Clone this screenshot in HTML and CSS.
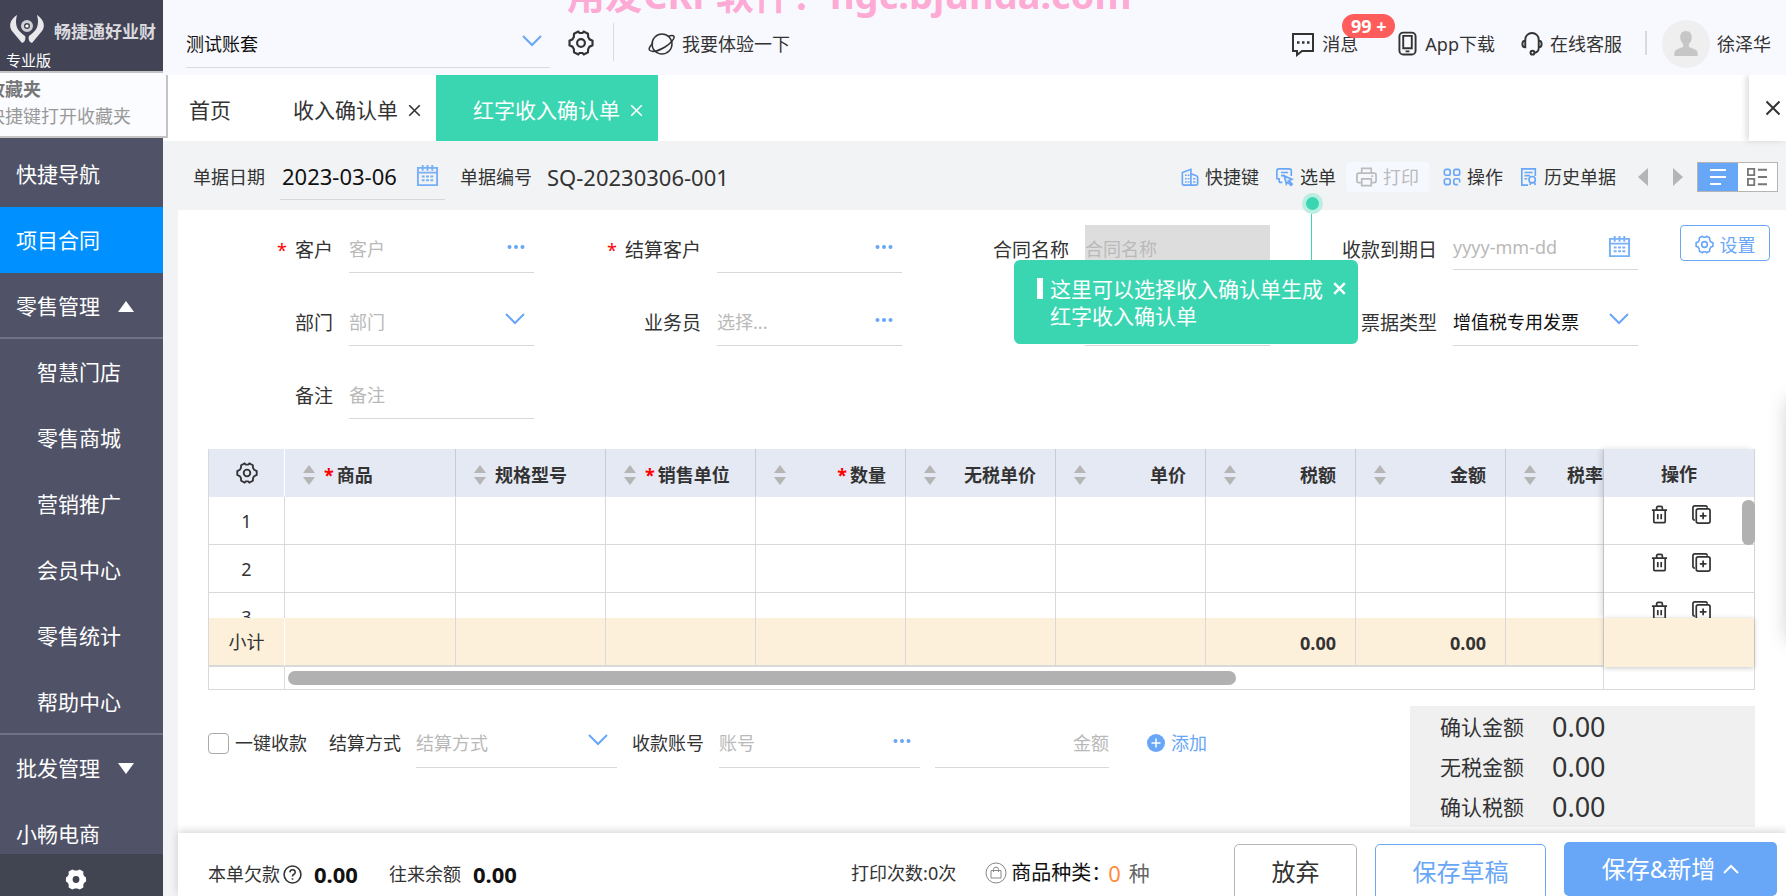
FILE: index.html
```html
<!DOCTYPE html>
<html lang="zh-CN">
<head>
<meta charset="utf-8">
<title>红字收入确认单</title>
<link rel="stylesheet" href="styles.css">
</head>
<body>
<svg class="sprite" aria-hidden="true">
  <symbol id="gear" viewBox="0 0 24 24"><path d="M9.4 1.5l1.3 1.3h2.6l1.3-1.3 3.8 2 .2 2.9 1.3 2.2 2.7 1.3v4.2l-2.7 1.3-1.3 2.2-.2 2.9-3.8 2-1.3-1.3h-2.6l-1.3 1.3-3.8-2-.2-2.9-1.3-2.2-2.7-1.3V9.9l2.7-1.3 1.3-2.2.2-2.9z"/><circle cx="12" cy="12" r="3.6"/></symbol>
  <symbol id="down" viewBox="0 0 20 12"><path d="M1 1l9 9 9-9"/></symbol>
  <symbol id="cross" viewBox="0 0 16 16"><path d="M1.500 1.500l13 13M14.500 1.500l-13 13"/></symbol>
  <symbol id="calendar" viewBox="0 0 24 24"><path d="M2 4h20v18H2zM2 9h20M7 1v6M12 1v6M17 1v6M6 13h3M10.500 13h3M15 13h3M6 17h3M10.500 17h3M15 17h3"/></symbol>
  <symbol id="dots" viewBox="0 0 18 6"><circle cx="2.500" cy="3" r="2"/><circle cx="9" cy="3" r="2"/><circle cx="15.500" cy="3" r="2"/></symbol>
  <symbol id="sort" viewBox="0 0 12 20"><path d="M6 0l6 8H0zM6 20l6-8H0z"/></symbol>
  <symbol id="trash" viewBox="0 0 18 20"><path d="M1 5.500h16M3 6v11.500q0 1 1 1h10q1 0 1-1V6M6 5V3q0-1.500 1.500-1.500h3Q12 1.500 12 3v2M7.200 9.500v5.500M10.800 9.500v5.500"/></symbol>
  <symbol id="copy" viewBox="0 0 20 20"><path d="M3 16q-2 0-2-2V3q0-2 2-2h11q2 0 2 2M6.500 4h10.500q2 0 2 2v11q0 2-2 2H6.500q-2 0-2-2V6q0-2 2-2zM11.700 8v7M8.200 11.500h7"/></symbol>
</svg>
<div class="app">
  <aside class="sidebar">
    <div class="logo">
      <div class="logo-row">
        <svg class="logo-mark" viewBox="0 0 36 30"><path d="M8 1C2 5-1 11 3 17l10 12c3-1 4-4 3-7C9 17 5 12 8 1zM28 1c6 4 9 10 5 16L23 29c-3-1-4-4-3-7 7-5 11-10 8-21z" fill="#e9e9ec"/><circle cx="18" cy="12" r="4.500" fill="#434356" stroke="#d0d0d6" stroke-width="3"/><circle cx="18" cy="12" r="1.600" fill="#fff"/></svg>
        <span class="logo-name">畅捷通好业财</span>
      </div>
      <span class="logo-edition">专业版</span>
    </div>
    <div class="nav-space"></div>
    <nav class="nav">
      <a href="#" class="nav-item">快捷导航</a>
      <a href="#" class="nav-item active">项目合同</a>
      <a href="#" class="nav-item ruled">零售管理<span class="tri up"></span></a>
      <a href="#" class="nav-item sub">智慧门店</a>
      <a href="#" class="nav-item sub">零售商城</a>
      <a href="#" class="nav-item sub">营销推广</a>
      <a href="#" class="nav-item sub">会员中心</a>
      <a href="#" class="nav-item sub">零售统计</a>
      <a href="#" class="nav-item sub ruled">帮助中心</a>
      <a href="#" class="nav-item">批发管理<span class="tri"></span></a>
      <a href="#" class="nav-item">小畅电商</a>
    </nav>
    <button class="side-settings" aria-label="系统设置"><svg viewBox="0 0 24 24"><path fill-rule="evenodd" d="M8 1l2.500 1.300h3L16 1l4 2.300v3.200L21 8.500l2 1.200v4.600l-2 1.200-1 2v3.200L16 23l-2.500-1.300h-3L8 23l-4-2.300v-3.200l-1-2-2-1.200V9.700l2-1.200 1-2V3.300zM12 8.300a3.700 3.700 0 100 7.400 3.700 3.700 0 100-7.400z"/></svg></button>
    <div class="fav"><strong>收藏夹</strong><span>快捷键打开收藏夹</span></div>
  </aside>

  <main class="main">
    <header class="topbar">
      <div class="watermark">用友CRP软件！ngc.bjunda.com</div>
      <button class="account">测试账套<svg class="chev"><use href="#down"/></svg></button>
      <button class="plain" aria-label="设置"><svg class="ic26 dark"><use href="#gear"/></svg></button>
      <span class="divider tall"></span>
      <a href="#" class="top-link try"><svg class="planet" viewBox="0 0 28 24"><circle cx="14" cy="12" r="10"/><path d="M5 11c-3 3-5 6-3 7.500 3 2 10-.5 15-3.500s10-8 9-10.500c-.6-1.300-3-1.200-5.500-.3"/></svg>我要体验一下</a>
      <div class="top-right">
        <a href="#" class="top-link msg"><svg class="ic26" viewBox="0 0 24 26"><path d="M2 3h20v17H11l-5 4v-4H2z"/><path d="M6 11.500h2.500M11 11.500h2.500M16 11.500h2.500" stroke-width="2.600"/></svg>消息<span class="badge">99 +</span></a>
        <a href="#" class="top-link"><svg class="phone" viewBox="0 0 20 26"><rect x="1.500" y="1.500" width="17" height="23" rx="4"/><path d="M5.500 5h9v13h-9zM8 21.300h4"/></svg>App下载</a>
        <a href="#" class="top-link"><svg class="head" viewBox="0 0 22 26"><path d="M4 10V9a7 7 0 0114 0v9q0 4-5 5M4 10q-3 0-3 3.500T4 17zM18 10q3 0 3 3.500T18 17z"/><circle cx="11.500" cy="22.500" r="2"/></svg>在线客服</a>
        <span class="divider"></span>
        <a href="#" class="top-link user"><span class="avatar"><svg viewBox="0 0 26 28"><path d="M13 1c4 0 6 3 6 6.500 0 3-1.500 5.500-3 7v3c4 1.500 9 3 9 6V27H1v-3.500c0-3 5-4.500 9-6v-3c-1.500-1.500-3-4-3-7C7 4 9 1 13 1z"/></svg></span>徐泽华</a>
      </div>
    </header>

    <div class="tabs">
      <a href="#" class="tab home">首页</a>
      <a href="#" class="tab">收入确认单<svg class="x"><use href="#cross"/></svg></a>
      <a href="#" class="tab current">红字收入确认单<svg class="x"><use href="#cross"/></svg></a>
      <button class="tabs-close" aria-label="关闭"><svg class="x big"><use href="#cross"/></svg></button>
    </div>

    <div class="toolbar">
      <label for="docdate">单据日期</label>
      <div class="date-box"><input id="docdate" value="2023-03-06"><svg class="ic24 blue"><use href="#calendar"/></svg></div>
      <span>单据编号</span><span class="docno">SQ-20230306-001</span>
      <div class="tools">
        <button class="tool"><svg viewBox="0 0 20 20"><path d="M3 19Q1.500 19 1.500 17.500V5L11 1.500V19zM11 6.500l6 2q1.500.5 1.500 2v7q0 1.500-1.500 1.500H3M4.500 8h1.800M7.500 8h1.800M4.500 12h1.800M7.500 12h1.800M4.500 15.500h1.800M7.500 15.500h1.800M13.500 12h2.500M13.500 15.500h2.500"/></svg>快捷键</button>
        <button class="tool pick"><svg viewBox="0 0 20 20"><path d="M7 16H5q-1.500 0-1.500-1.500V12H1V3q0-2 2-2h12q2 0 2 2v6M5.500 5h8M5.500 8.500h4"/><path d="M9 8.500l9 4-3.500 1.500L18 18l-1.500 1.300-3.300-3.600L11.500 18z" fill="#d5e6fd"/></svg>选单</button>
        <button class="tool off" disabled><svg viewBox="0 0 22 20"><path d="M6 6V1h10v5M5 16H3q-2 0-2-2V8q0-2 2-2h16q2 0 2 2v6q0 2-2 2h-2M6 12h10v7H6zM16 9h2"/></svg>打印</button>
        <button class="tool"><svg viewBox="0 0 20 20"><rect x="1.500" y="1.500" width="6.500" height="6.500" rx="2"/><rect x="12" y="1.500" width="6.500" height="6.500" rx="2"/><rect x="1.500" y="12" width="6.500" height="6.500" rx="2"/><path d="M18.500 16v-2q0-2-2-2H14q-2 0-2 2v2.500q0 2 2 2h2.500"/></svg>操作</button>
        <button class="tool"><svg viewBox="0 0 20 20"><path d="M9 19H2V1h15v8M5 5h9M5 8.500h6M5 12h3"/><circle cx="13.500" cy="13" r="3.500"/><path d="M12 16l-1 3M16 15.500l1 3.500"/></svg>历史单据</button>
        <button class="arrow" aria-label="上一张"><span class="left"></span></button>
        <button class="arrow" aria-label="下一张"><span class="right"></span></button>
        <div class="views">
          <button class="on" aria-label="列表"><svg viewBox="0 0 22 20"><path d="M3 3h16M3 10h16M3 17h11"/></svg></button>
          <button aria-label="卡片"><svg viewBox="0 0 24 22"><path d="M2 2h7v7H2zM2 13h7v7H2zM13 3h10M13 11h10M13 19h10"/></svg></button>
        </div>
      </div>
    </div>

    <div class="sheet-wrap">
      <section class="sheet">
        <form class="form">
          <div class="fields">
            <div class="field"><label for="f1"><i>*</i>客户</label><div class="ctl"><input id="f1" placeholder="客户"><svg class="dots"><use href="#dots"/></svg></div></div>
            <div class="field"><label for="f2"><i>*</i>结算客户</label><div class="ctl"><input id="f2"><svg class="dots"><use href="#dots"/></svg></div></div>
            <div class="field"><label for="f3">合同名称</label><div class="ctl grey"><input id="f3" placeholder="合同名称" disabled></div></div>
            <div class="field"><label for="f4">收款到期日</label><div class="ctl date"><input id="f4" placeholder="yyyy-mm-dd"><svg class="ic24 blue"><use href="#calendar"/></svg></div></div>
            <div class="field"><label for="f5">部门</label><div class="ctl"><input id="f5" placeholder="部门"><svg class="chev"><use href="#down"/></svg></div></div>
            <div class="field"><label for="f6">业务员</label><div class="ctl"><input id="f6" placeholder="选择..."><svg class="dots"><use href="#dots"/></svg></div></div>
            <div class="field"><label for="f7"></label><div class="ctl"><input id="f7" aria-label="合同编号"></div></div>
            <div class="field"><label for="f8">票据类型</label><div class="ctl"><select id="f8"><option>增值税专用发票</option></select><svg class="chev"><use href="#down"/></svg></div></div>
            <div class="field"><label for="f9">备注</label><div class="ctl"><input id="f9" placeholder="备注"></div></div>
          </div>
          <button type="button" class="set"><svg><use href="#gear"/></svg>设置</button>
        </form>

        <div class="grid">
          <div class="grid-main">
            <div class="rows">
              <table>
                <colgroup><col class="c-no"><col class="c-name"><col span="8"></colgroup>
                <thead><tr>
                  <th class="no"><svg class="ic22 dark"><use href="#gear"/></svg></th>
                  <th><div class="th start"><svg><use href="#sort"/></svg><span><i>*</i>商品</span></div></th>
                  <th><div class="th start"><svg><use href="#sort"/></svg><span>规格型号</span></div></th>
                  <th><div class="th start"><svg><use href="#sort"/></svg><span><i>*</i>销售单位</span></div></th>
                  <th><div class="th"><svg><use href="#sort"/></svg><span><i>*</i>数量</span></div></th>
                  <th><div class="th"><svg><use href="#sort"/></svg><span>无税单价</span></div></th>
                  <th><div class="th"><svg><use href="#sort"/></svg><span>单价</span></div></th>
                  <th><div class="th"><svg><use href="#sort"/></svg><span>税额</span></div></th>
                  <th><div class="th"><svg><use href="#sort"/></svg><span>金额</span></div></th>
                  <th><div class="th start rate"><svg><use href="#sort"/></svg><span>税率</span></div></th>
                </tr></thead>
                <tbody>
                  <tr><td class="no">1</td><td></td><td></td><td></td><td></td><td></td><td></td><td></td><td></td><td></td></tr>
                  <tr><td class="no">2</td><td></td><td></td><td></td><td></td><td></td><td></td><td></td><td></td><td></td></tr>
                  <tr><td class="no">3</td><td></td><td></td><td></td><td></td><td></td><td></td><td></td><td></td><td></td></tr>
                </tbody>
              </table>
            </div>
            <table class="sum">
              <colgroup><col class="c-no"><col class="c-name"><col span="8"></colgroup>
              <tbody><tr><td class="no">小计</td><td></td><td></td><td></td><td></td><td></td><td></td><td>0.00</td><td>0.00</td><td></td></tr></tbody>
            </table>
            <div class="track"><span class="track-no"></span><span class="thumb"></span></div>
          </div>
          <div class="grid-ops">
            <div class="rows">
              <div class="ops-head">操作</div>
              <div class="ops-row"><button aria-label="删除"><svg><use href="#trash"/></svg></button><button aria-label="复制"><svg><use href="#copy"/></svg></button></div>
              <div class="ops-row"><button aria-label="删除"><svg><use href="#trash"/></svg></button><button aria-label="复制"><svg><use href="#copy"/></svg></button></div>
              <div class="ops-row"><button aria-label="删除"><svg><use href="#trash"/></svg></button><button aria-label="复制"><svg><use href="#copy"/></svg></button></div>
            </div>
            <div class="ops-sum"></div>
            <span class="vthumb"></span>
          </div>
        </div>

        <div class="after">
          <div class="pay">
            <label class="check"><input type="checkbox">一键收款</label>
            <label for="p1">结算方式</label>
            <div class="ctl w-way"><input id="p1" placeholder="结算方式"><svg class="chev"><use href="#down"/></svg></div>
            <label for="p2">收款账号</label>
            <div class="ctl w-acct"><input id="p2" placeholder="账号"><svg class="dots"><use href="#dots"/></svg></div>
            <div class="ctl w-amt"><input aria-label="金额" placeholder="金额"></div>
            <button class="add"><svg viewBox="0 0 18 18"><circle cx="9" cy="9" r="9"/><path d="M9 4.500v9M4.500 9h9"/></svg>添加</button>
          </div>
          <dl class="totals">
            <div><dt>确认金额</dt><dd>0.00</dd></div>
            <div><dt>无税金额</dt><dd>0.00</dd></div>
            <div><dt>确认税额</dt><dd>0.00</dd></div>
          </dl>
        </div>

        <footer class="foot">
          <div class="foot-info">
            <span>本单欠款</span><svg class="help" viewBox="0 0 18 18"><circle cx="9" cy="9" r="8"/><path d="M6.500 7q.2-2.500 2.600-2.500T11.500 7q0 1.200-1.500 2-1 .6-1 1.800M9 12.500v1.500"/></svg><b>0.00</b>
            <span class="second">往来余额</span><b>0.00</b>
          </div>
          <div class="foot-mid">
            <span>打印次数:0次</span>
            <svg class="bag" viewBox="0 0 22 22"><circle cx="11" cy="11" r="10"/><path d="M6 8.500h10v7.500H6zM8.500 10V7.500Q8.500 5 11 5t2.500 2.500V10"/></svg>
            <span class="kinds">商品种类：</span><span class="count">0</span><span class="unit">种</span>
          </div>
          <div class="foot-btns">
            <button class="btn">放弃</button>
            <button class="btn draft">保存草稿</button>
            <button class="btn save">保存&amp;新增<svg viewBox="0 0 16 10"><path d="M1 9l7-7 7 7"/></svg></button>
          </div>
        </footer>
        <div class="edge"></div>
        <div class="tip">
          <span class="tip-dot"></span><span class="tip-line"></span>
          <span class="tip-bar"></span>
          <p>这里可以选择收入确认单生成红字收入确认单</p>
          <button aria-label="关闭提示"><svg class="x"><use href="#cross"/></svg></button>
        </div>
      </section>
    </div>
  </main>
</div>
</body>
</html>
```

FILE: styles.css
```css
* { box-sizing: border-box; }
body {
  margin: 0;
  font-family: "Noto Sans", "Noto Sans CJK SC", sans-serif;
  font-size: 18px;
  line-height: 24px;
  color: #333;
  background: #f2f3f5;
}
button, input, select { font: inherit; color: inherit; border: 0; background: none; padding: 0; margin: 0; border-radius: 0; }
a { color: inherit; text-decoration: none; }
i { font-style: normal; color: #f00; }
svg { fill: none; stroke: currentColor; flex: none; display: block; }
.sprite { position: absolute; width: 0; height: 0; }
.app { display: flex; height: 100vh; overflow: hidden; }
.main { flex: 1; min-width: 0; display: flex; flex-direction: column; }

.chev { width: 20px; height: 12px; color: #68a6f7; stroke-width: 2; }
.dots { width: 18px; height: 6px; fill: #68a6f7; stroke: none; }
.x { width: 13px; height: 13px; stroke-width: 2; }
.x.big { width: 16px; height: 16px; }
.ic22 { width: 22px; height: 22px; stroke-width: 2; }
.ic24 { width: 23px; height: 23px; stroke-width: 2; }
.ic26 { width: 26px; height: 26px; stroke-width: 2; }
.blue { color: #78b0f8; }
.dark { color: #333; }

.sidebar { position: relative; width: 163px; flex: none; display: flex; flex-direction: column; background: #505367; color: #fff; font-size: 21px; }
.logo { height: 71px; flex: none; background: #434356; padding: 14px 0 0 6px; }
.logo-row { display: flex; align-items: center; gap: 9px; padding-left: 3px; }
.logo-mark { width: 36px; height: 30px; stroke: none; }
.logo-name { font-size: 17px; font-weight: bold; color: #d9d9de; white-space: nowrap; padding-top: 6px; }
.logo-edition { display: block; font-size: 15px; line-height: 20px; padding-top: 6px; height: 27px; }
.nav-space { height: 70px; flex: none; }
.nav { flex: 1; min-height: 0; overflow: hidden; }
.nav-item { display: flex; align-items: center; height: 66px; padding: 2px 0 0 16px; border-bottom: 2px solid transparent; }
.nav-item.active { background: #0090ff; }
.nav-item.sub { padding-left: 37px; }
.nav-item.ruled { border-bottom-color: #6f7284; }
.tri { margin-left: 18px; border: 8px solid transparent; border-top: 11px solid #fff; border-bottom: 0; }
.tri.up { border-top: 0; border-bottom: 11px solid #fff; }
.side-settings { height: 42px; flex: none; background: #414451; padding: 14px 0 0 65px; display: flex; align-items: flex-start; }
.side-settings svg { width: 22px; height: 23px; fill: #fff; stroke: none; }
.fav { position: absolute; left: -20px; top: 71px; width: 188px; height: 67px; padding: 3px 0 0 5px; background: #fbfcff; border: 2px solid #c4c4c4; color: #999; font-size: 18px; line-height: 28px; }
.fav strong { display: block; color: #777; line-height: 26px; }
.fav span { white-space: nowrap; }

.topbar { position: relative; height: 75px; flex: none; display: flex; align-items: center; background: #f8f9fe; overflow: hidden; padding: 0 15px 0 23px; }
.watermark { position: absolute; left: 404px; top: -33px; font-size: 38px; line-height: 54px; font-weight: bold; color: #fdaad5; white-space: nowrap; }
.account { width: 364px; height: 48px; margin-top: 12px; padding: 2px 8px 0 0; display: flex; align-items: center; justify-content: space-between; border-bottom: 1px solid #d9dbe0; color: #111; }
.account .chev { margin-bottom: 6px; }
.plain { margin-left: 18px; padding-top: 10px; height: 36px; }
.divider { width: 2px; height: 24px; background: #d9dadd; }
.divider.tall { height: 38px; width: 1px; margin: 8px 34px 0 19px; }
.top-link { display: flex; align-items: center; margin-top: 12px; white-space: nowrap; }
.planet { width: 28px; height: 24px; margin-right: 6px; stroke-width: 1.500; }
.top-right { display: flex; align-items: center; margin-left: auto; }
.msg { position: relative; gap: 6px; margin-right: 40px; }
.badge { position: absolute; left: 52px; top: -17px; width: 53px; height: 24px; border-radius: 12px; background: #ff5c5c; color: #fff; font-weight: bold; font-size: 18px; line-height: 24px; text-align: center; }
.phone { width: 19px; height: 25px; margin-right: 8px; stroke-width: 2; }
.head { width: 22px; height: 25px; margin: 0 7px 0 26px; stroke-width: 2; }
.top-right .divider { margin: 10px 0 0 23px; }
.user { margin-left: 15px; gap: 7px; }
.avatar { width: 48px; height: 48px; border-radius: 50%; background: #efefef; display: grid; place-items: center; }
.avatar svg { width: 26px; height: 27px; fill: #c6c6c6; stroke: none; }

.tabs { height: 66px; flex: none; display: flex; background: #fff; font-size: 21px; padding-left: 26px; }
.tab { display: flex; align-items: center; gap: 10px; padding: 4px 15px 0 62px; }
.tab.home { padding: 4px 0 0; }
.tab.current { background: #3ad6b2; color: #fff; padding: 4px 15px 0 37px; }
.tabs-close { margin-left: auto; width: 37px; display: grid; place-items: center; padding-left: 10px; box-shadow: -3px 0 6px rgba(0, 0, 0, .13); }

.toolbar { height: 69px; flex: none; display: flex; align-items: center; padding: 3px 8px 0 30px; white-space: nowrap; }
.date-box { display: flex; align-items: center; width: 165px; height: 46px; margin: 0 15px; padding: 0 6px 2px 0; border-bottom: 1px solid #d6d7da; }
.date-box input { flex: 1; min-width: 0; font-size: 22px; color: #111; padding-left: 2px; }
.docno { font-size: 22px; margin-left: 15px; }
.tools { display: flex; align-items: center; margin-left: auto; }
.tool { display: flex; align-items: center; gap: 6px; margin-right: 17px; height: 30px; }
.tool svg { width: 18px; height: 20px; stroke: #68a6f7; stroke-width: 1.800; }
.tool.pick { margin-right: 10px; }
.tool.off { color: #bbb; background: #f5f8ff; padding: 0 10px; border-radius: 4px; margin-right: 14px; }
.tool.off svg { width: 21px; stroke: #bbb; }
.arrow { width: 35px; height: 20px; display: grid; place-items: center; }
.left, .right { border: 9px solid transparent; }
.left { border-right: 10px solid #b5b5b5; border-left: 0; }
.right { border-left: 10px solid #b5b5b5; border-right: 0; }
.tool + .arrow { margin-left: -8px; }
.views { display: flex; margin-left: 2px; border: 1px solid #b5b5b5; background: #fff; height: 30px; width: 81px; }
.views button { flex: 1; display: grid; place-items: center; }
.views .on { background: #68a6f7; color: #fff; }
.views svg { width: 22px; height: 20px; stroke-width: 2; }
.views button:last-child { color: #777; }

.sheet-wrap { flex: 1; min-height: 0; padding-left: 15px; display: flex; }
.sheet { position: relative; flex: 1; min-width: 0; display: flex; flex-direction: column; background: #fff; }
.form { display: flex; gap: 42px; padding: 15px 16px 30px 0; align-items: flex-start; }
.fields { flex: 1; display: grid; grid-template-columns: repeat(4, 1fr); column-gap: 12px; row-gap: 25px; }
.field { display: flex; gap: 16px; align-items: stretch; }
.field label { width: 155px; flex: none; text-align: right; font-size: 19px; line-height: 50px; height: 48px; }
.field label i { margin-right: 8px; font-size: 18px; }
.ctl { display: flex; align-items: center; justify-content: space-between; flex: 1; min-width: 0; height: 48px; border-bottom: 1px solid #d9d9d9; padding-right: 9px; }
.ctl input, .ctl select { flex: 1; width: 100%; min-width: 0; height: 46px; appearance: none; color: #111; }
.ctl input::placeholder { color: #b9b9b9; opacity: 1; }
.ctl.grey { background: #ddd; border-color: #ddd; }
.ctl.date { height: 45px; padding-right: 7px; }
.ctl.date .ic24 { margin-bottom: 2px; }
.ctl .dots { margin-bottom: 3px; }
.ctl .chev { margin-bottom: 6px; }
.set { display: flex; align-items: center; justify-content: center; gap: 6px; width: 90px; height: 36px; padding-top: 3px; border: 1px solid #68a6f7; border-radius: 4px; color: #68a6f7; }
.set svg { width: 19px; height: 19px; stroke-width: 2; }

.grid { display: flex; margin: 0 31px 0 30px; border: 1px solid #d9d9d9; border-top: 0; }
.grid-main { flex: 1; min-width: 0; overflow: hidden; }
.rows { height: 169px; overflow: hidden; }
table { table-layout: fixed; width: 1447px; border-collapse: separate; border-spacing: 0; }
col { width: 150px; }
.c-no { width: 76px; }
.c-name { width: 171px; }
th, td { height: 48px; padding: 0; border-right: 1px solid #d9d9d9; border-bottom: 1px solid #d9d9d9; }
th { background: #e5e9f4; border-bottom-color: #e5e9f4; border-right-color: #c9cbd0; color: #333; }
th.no { border-right-color: #fff; }
th.no svg { margin: 0 auto; }
td.no { text-align: center; font-weight: normal; padding: 0; }
.th { display: flex; align-items: center; justify-content: space-between; padding: 4px 19px 0 18px; }
.th svg { width: 12px; height: 20px; fill: #b5b5b5; stroke: none; }
.th.start { justify-content: flex-start; gap: 9px; }
.th.rate { gap: 31px; }
.th i { margin-right: 3px; }
.sum td { height: 49px; background: #fdf0db; border-bottom: 2px solid #d9d9d9; text-align: right; font-weight: bold; padding: 2px 19px 0 0; }
.sum .no { text-align: center; font-weight: normal; padding: 0; border-right-color: #fff; }
.track { display: flex; align-items: center; height: 22px; }
.track-no { width: 76px; align-self: stretch; border-right: 1px solid #d9d9d9; }
.thumb { width: 68%; height: 14px; margin-left: 3px; border-radius: 7px; background: #b1b1b1; }
.grid-ops { position: relative; width: 151px; border-left: 1px solid #d9d9d9; }
.grid-ops .rows { box-shadow: -3px 0 6px rgba(0, 0, 0, .13); }
.ops-head { height: 48px; background: #e5e9f4; text-align: center; font-weight: bold; line-height: 50px; }
.ops-row { height: 48px; display: flex; align-items: center; justify-content: center; gap: 23px; padding: 0 0 12px 2px; border-bottom: 1px solid #d9d9d9; }
.ops-row svg { width: 19px; height: 19px; stroke-width: 1.800; }
.ops-sum { height: 49px; background: #fdf0db; box-shadow: 0 1px 5px rgba(0, 0, 0, .22); }
.vthumb { position: absolute; right: -1px; top: 51px; width: 13px; height: 45px; border-radius: 6px; background: #b1b1b1; }

.after { display: flex; justify-content: space-between; align-items: flex-start; padding: 16px 31px 0 30px; flex: 1; min-height: 0; white-space: nowrap; }
.pay { display: flex; align-items: center; padding-top: 12px; }
.pay .ctl { flex: none; height: 50px; margin-left: 15px; }
.check { display: flex; align-items: center; gap: 6px; margin-right: 22px; }
.check input { appearance: none; width: 21px; height: 21px; border: 1px solid #aaa; border-radius: 4px; background: #fff; }
.pay .w-way { width: 201px; margin-right: 15px; }
.w-acct { width: 201px; }
.pay .w-amt { width: 174px; padding: 0; }
.w-amt input { text-align: right; }
.add { display: flex; align-items: center; gap: 6px; margin-left: 38px; color: #68a6f7; }
.add svg { width: 18px; height: 18px; fill: #68a6f7; stroke: none; }
.add path { stroke: #fff; stroke-width: 1.500; }
.totals { margin: 0; width: 345px; padding: 1px 0 0 30px; background: #f0f0f0; font-size: 21px; }
.totals div { display: flex; align-items: center; height: 40px; gap: 28px; }
.totals dd { margin: 0; font-size: 27px; }

.foot { position: relative; height: 63px; flex: none; display: flex; justify-content: space-between; background: #fff; box-shadow: 0 -2px 8px rgba(0, 0, 0, .16); padding: 9px 9px 0 30px; white-space: nowrap; }
.foot-info, .foot-mid { display: flex; align-items: center; height: 64px; }
.help { width: 19px; height: 19px; margin: 0 12px 0 3px; stroke-width: 1.500; }
.foot b { font-size: 22px; color: #111; }
.foot .second { margin: 0 12px 0 31px; }
.bag { width: 22px; height: 22px; margin: 0 4px 0 29px; color: #888; }
.foot-mid { margin-left: 250px; height: 62px; }
.kinds { font-size: 20px; color: #111; width: 97px; }
.count { font-size: 22px; color: #ff8b3d; }
.unit { font-size: 21px; color: #666; margin-left: 8px; }
.foot-btns { display: flex; gap: 18px; align-items: flex-start; font-size: 24px; }
.btn { width: 123px; height: 56px; margin-top: 2px; border: 1px solid #b5b5b5; border-radius: 5px; background: #fff; }
.btn.draft { width: 171px; border-color: #68a6f7; color: #68a6f7; }
.btn.save { width: 213px; height: 54px; margin-top: 0; display: flex; align-items: center; justify-content: center; gap: 8px; border: 0; background: #68a6f7; color: #fff; }
.save svg { width: 16px; height: 10px; stroke-width: 2; }

.edge { position: absolute; right: -22px; top: 190px; width: 20px; height: 240px; box-shadow: 0 0 20px rgba(0, 0, 0, .22); }
.tip { position: absolute; right: 428px; top: 50px; width: 344px; height: 84px; border-radius: 6px; background: #3ad6b2; color: #fff; font-size: 21px; line-height: 27px; padding: 16px 34px 0 36px; }
.tip p { margin: 0; }
.tip .tip-bar { position: absolute; left: 23px; top: 18px; width: 6px; height: 21px; background: #fff; }
.tip button { position: absolute; right: 12px; top: 22px; }
.tip .x { stroke-width: 3; }
.tip-line { position: absolute; right: 46px; bottom: 84px; width: 1px; height: 46px; background: #3ad6b2; }
.tip-dot { position: absolute; right: 35px; top: -67px; width: 21px; height: 21px; border: 4px solid #b9eee1; border-radius: 50%; background: #3ad6b2; }
```
